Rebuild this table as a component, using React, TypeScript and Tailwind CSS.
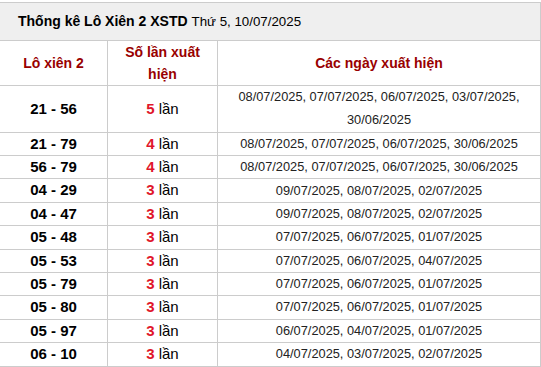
const rows = [
    { pair: '21 - 56', count: 5, dates: '08/07/2025, 07/07/2025, 06/07/2025, 03/07/2025, 30/06/2025' },
    { pair: '21 - 79', count: 4, dates: '08/07/2025, 07/07/2025, 06/07/2025, 30/06/2025' },
    { pair: '56 - 79', count: 4, dates: '08/07/2025, 07/07/2025, 06/07/2025, 30/06/2025' },
    { pair: '04 - 29', count: 3, dates: '09/07/2025, 08/07/2025, 02/07/2025' },
    { pair: '04 - 47', count: 3, dates: '09/07/2025, 08/07/2025, 02/07/2025' },
    { pair: '05 - 48', count: 3, dates: '07/07/2025, 06/07/2025, 01/07/2025' },
    { pair: '05 - 53', count: 3, dates: '07/07/2025, 06/07/2025, 04/07/2025' },
    { pair: '05 - 79', count: 3, dates: '07/07/2025, 06/07/2025, 01/07/2025' },
    { pair: '05 - 80', count: 3, dates: '07/07/2025, 06/07/2025, 01/07/2025' },
    { pair: '05 - 97', count: 3, dates: '06/07/2025, 04/07/2025, 01/07/2025' },
    { pair: '06 - 10', count: 3, dates: '04/07/2025, 03/07/2025, 02/07/2025' },
];

export default function App() {
    return (
        <div className="w-[541px] h-[367px] overflow-hidden bg-white pt-[2px] font-['Liberation_Sans',Arial,sans-serif] text-black">
            {/* Title */}
            <div className="h-[39px] flex items-center pl-[18px] bg-[#efefef] border-y border-r border-[#cccccc] text-[14px]">
                <span className="font-bold">Thống kê Lô Xiên 2 XSTD</span>
                <span className="ml-[4px] text-[13.3px]">Thứ 5, 10/07/2025</span>
            </div>

            {/* Header */}
            <div className="grid grid-cols-[108px_110px_1fr] h-[45px] border-b border-r border-[#cccccc] text-[14px] font-bold text-[#990000] leading-[22px]">
                <div className="flex items-center justify-center border-r border-[#cccccc]">Lô xiên 2</div>
                <div className="flex items-center justify-center text-center border-r border-[#cccccc] px-4">Số lần xuất hiện</div>
                <div className="flex items-center justify-center">Các ngày xuất hiện</div>
            </div>

            {/* Rows */}
            {rows.map((r, i) => (
                <div
                    key={r.pair}
                    className={`grid grid-cols-[108px_110px_1fr] border-b border-r border-[#cccccc] ${i === 0 ? 'h-[46.7px]' : 'h-[23.4px]'}`}
                >
                    <div className="flex items-center justify-center border-r border-[#cccccc] text-[15px] font-bold">{r.pair}</div>
                    <div className="flex items-center justify-center border-r border-[#cccccc] text-[15px]">
                        <span className="font-bold text-[#e0162b] mr-1">{r.count}</span>lần
                    </div>
                    <div className="flex items-center justify-center text-center text-[12.8px] leading-[22.4px] text-[#222] px-5">
                        {r.dates}
                    </div>
                </div>
            ))}
        </div>
    );
}
